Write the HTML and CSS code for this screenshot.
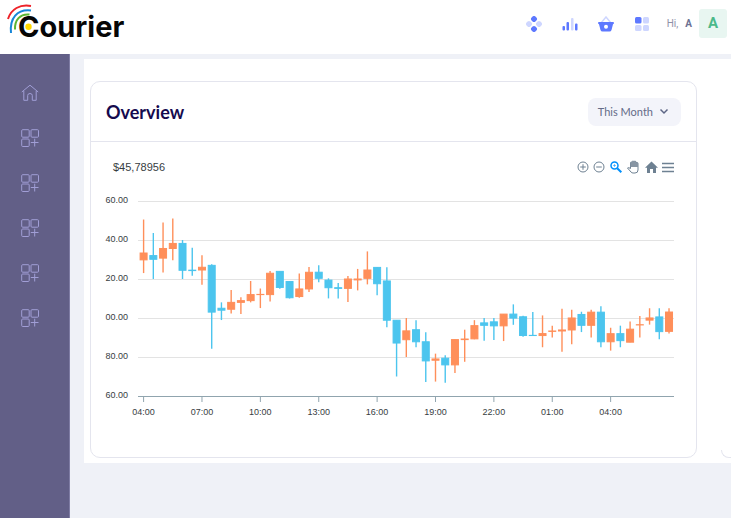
FILE: index.html
```html
<!DOCTYPE html>
<html lang="en">
<head>
    <meta charset="UTF-8">
    <meta name="viewport" content="width=device-width, initial-scale=1.0">
    <title>Courier</title>
    <link rel="stylesheet" href="styles.css">
</head>
<body>
    <header class="topbar">
        <a class="logo" href="#" aria-label="Courier">
            <svg width="130" height="48" viewBox="0 0 130 48">
                <text x="18" y="37" class="logo-text">Courier</text>
                <g fill="none" stroke-width="2">
                    <path d="M8 19 C11 9 20 4 31 6" stroke="#ee2229"/>
                    <path d="M11 33 C9.500 18 17 9 31 10.500" stroke="#1787d8"/>
                    <path d="M15 29.500 C14.500 20 20 13.500 29.500 14.500" stroke="#5cb531"/>
                </g>
                <circle cx="28.500" cy="26.700" r="3.200" fill="#ffd800"/>
            </svg>
        </a>

        <nav class="actions">
            <button type="button" aria-label="Apps">
                <svg width="16" height="16" viewBox="0 0 16 16">
                    <rect x="5.300" y="0.300" width="5.400" height="5.400" rx="2" transform="rotate(45 8 3)" fill="#5d78ff"/>
                    <rect x="5.300" y="10.300" width="5.400" height="5.400" rx="2" transform="rotate(45 8 13)" fill="#5d78ff"/>
                    <rect x="0.300" y="5.300" width="5.400" height="5.400" rx="2" transform="rotate(45 3 8)" fill="#ced6ff"/>
                    <rect x="10.300" y="5.300" width="5.400" height="5.400" rx="2" transform="rotate(45 13 8)" fill="#ced6ff"/>
                </svg>
            </button>
            <button type="button" aria-label="Statistics">
                <svg width="16" height="16" viewBox="0 0 16 16">
                    <rect x="0.500" y="10" width="2.500" height="4.500" rx="1" fill="#5d78ff"/>
                    <rect x="4.500" y="6" width="2.500" height="8.500" rx="1" fill="#5d78ff"/>
                    <rect x="9" y="2" width="2.500" height="12.500" rx="1" fill="#ced6ff"/>
                    <rect x="13" y="7.500" width="2.500" height="7" rx="1" fill="#5d78ff"/>
                </svg>
            </button>
            <button type="button" aria-label="Basket">
                <svg width="16" height="16" viewBox="0 0 16 16">
                    <path d="M3 7 L8 1 L13 7" fill="none" stroke="#ced6ff" stroke-width="1.500"/>
                    <path d="M1 6 H15 Q16 6 16 7 Q16 8 15 8.300 L13.500 14 Q13 15.500 11.500 15.500 H4.500 Q3 15.500 2.500 14 L1 8.300 Q0 8 0 7 Q0 6 1 6 Z" fill="#5d78ff"/>
                    <circle cx="8" cy="10.800" r="2" fill="#fff"/>
                </svg>
            </button>
            <button type="button" aria-label="Widgets">
                <svg width="16" height="16" viewBox="0 0 16 16">
                    <rect x="1" y="1" width="6.500" height="6.500" rx="1.500" fill="#5d78ff"/>
                    <rect x="9" y="1" width="6" height="6.500" rx="1.500" fill="#ced6ff"/>
                    <rect x="1" y="9" width="6.500" height="6" rx="1.500" fill="#ced6ff"/>
                    <rect x="9" y="9" width="6" height="6" rx="1.500" fill="#ced6ff"/>
                </svg>
            </button>
            <a class="user" href="#">
                <span>Hi,</span>
                <b>A</b>
                <span class="avatar">A</span>
            </a>
        </nav>
    </header>

    <div class="layout">
        <nav class="sidebar">
            <a href="#" aria-label="Home">
                <svg width="18" height="18" viewBox="0 0 18 18">
                    <path d="M0.800 8 L9 1.200 L17.200 8 M2.800 7 V16.300 H6.700 V11.500 Q6.700 9.500 9 9.500 Q11.300 9.500 11.300 11.500 V16.300 H15.200 V7"/>
                </svg>
            </a>
            <a href="#" aria-label="Menu 1"><svg width="18" height="18"><use href="#grid-plus"/></svg></a>
            <a href="#" aria-label="Menu 2"><svg width="18" height="18"><use href="#grid-plus"/></svg></a>
            <a href="#" aria-label="Menu 3"><svg width="18" height="18"><use href="#grid-plus"/></svg></a>
            <a href="#" aria-label="Menu 4"><svg width="18" height="18"><use href="#grid-plus"/></svg></a>
            <a href="#" aria-label="Menu 5"><svg width="18" height="18"><use href="#grid-plus"/></svg></a>
            <svg width="0" height="0" class="defs">
                <symbol id="grid-plus" viewBox="0 0 18 18">
                    <rect x="0.700" y="0.700" width="7.500" height="7.500" rx="1"/>
                    <rect x="10" y="0.700" width="7.500" height="7.500" rx="1"/>
                    <rect x="0.700" y="10" width="7.500" height="7.500" rx="1"/>
                    <path d="M13.700 9.700 V17.500 M9.800 13.500 H17.500"/>
                </symbol>
            </svg>
        </nav>

        <main class="content">
            <div class="panel">
                <section class="card">
                    <div class="card-header">
                        <h1>Overview</h1>
                        <button type="button" class="dropdown">
                            This Month
                            <svg width="10" height="8" viewBox="0 0 10 8">
                                <path d="M1.500 1.500 L5 5 L8.500 1.500" fill="none" stroke="#5d6685" stroke-width="1.500"/>
                            </svg>
                        </button>
                    </div>

                    <div class="chart-top">
                        <span class="price">$45,78956</span>
                        <div class="toolbar">
                            <button type="button" aria-label="Zoom in">
                                <svg width="12" height="12" viewBox="0 0 12 12" fill="none" stroke="#6e8192">
                                    <circle cx="6" cy="6" r="5"/>
                                    <path d="M6 3.200 V8.800 M3.200 6 H8.800"/>
                                </svg>
                            </button>
                            <button type="button" aria-label="Zoom out">
                                <svg width="12" height="12" viewBox="0 0 12 12" fill="none" stroke="#6e8192">
                                    <circle cx="6" cy="6" r="5"/>
                                    <path d="M3.200 6 H8.800"/>
                                </svg>
                            </button>
                            <button type="button" aria-label="Selection zoom">
                                <svg width="13" height="12" viewBox="0 0 13 12" fill="none" stroke="#008ffb">
                                    <circle cx="5.500" cy="4.500" r="3.500" stroke-width="1.500"/>
                                    <path d="M8.200 7.200 L12.300 11.300" stroke-width="2"/>
                                    <path d="M4 4.500 H7 M5.500 3 V6" stroke-width="0.500"/>
                                </svg>
                            </button>
                            <button type="button" aria-label="Pan">
                                <svg width="14" height="14" viewBox="0 0 14 14">
                                    <path d="M4.500 8.500 V3 Q4.500 2 5.300 2 Q6 2 6 3 V2 Q6.200 1 7 1 Q7.800 1 8 2 V1.800 Q8.200 1 9 1.100 Q9.800 1.200 10 2 V3 Q10.300 2.300 11 2.400 Q12 2.500 12 3.500 V10 Q12 13 9 13 H7 Q5.800 13 5 12 L1.500 8 Q2.500 7 4.500 8.500 Z" fill="#fff" stroke="#6e8192"/>
                                    <path d="M4.500 3 H6 V1.500 H8 V1 H10 V3 H12 V7 H4.500 Z" fill="#8795a3"/>
                                </svg>
                            </button>
                            <button type="button" aria-label="Reset zoom">
                                <svg width="14" height="14" viewBox="0 0 14 14">
                                    <path d="M7.500 1.500 L14 7.800 H12 V13 H9 V9 H6 V13 H3 V7.800 H1 Z" fill="#6e8192"/>
                                </svg>
                            </button>
                            <button type="button" aria-label="Menu">
                                <svg width="12" height="12" viewBox="0 0 12 12">
                                    <path d="M0 2.500 H12 M0 6.500 H12 M0 10.500 H12" stroke="#6e8192" stroke-width="1.400"/>
                                </svg>
                            </button>
                        </div>
                    </div>

                    <svg class="chart" id="chart" viewBox="0 0 605 230"></svg>
                </section>

                <section class="next-card"></section>
            </div>
        </main>
    </div>

    <script src="script.js"></script>
</body>
</html>
```
FILE: styles.css
```css
* {
    box-sizing: border-box;
}

body {
    margin: 0;
    min-height: 100vh;
    display: flex;
    flex-direction: column;
    background-color: #eff1f7;
    font-family: Lato, sans-serif;
    overflow-x: hidden;
}

button {
    border: none;
    background: none;
    padding: 0;
    cursor: pointer;
}

svg {
    display: block;
}

a {
    text-decoration: none;
}

/* top bar */
.topbar {
    height: 54px;
    background-color: #fff;
    display: flex;
    justify-content: space-between;
    padding-right: 4px;
}

.logo-text {
    font-family: Inter, sans-serif;
    font-size: 29px;
    font-weight: 700;
    fill: #060606;
}

.actions {
    display: flex;
    align-items: center;
    gap: 20px;
    height: 47px;
}

.user {
    display: flex;
    align-items: center;
    gap: 7px;
    margin-left: -3px;
    font-family: Roboto, sans-serif;
    font-size: 10px;
    color: #8f91a8;
}

.user b {
    color: #6c7293;
}

.avatar {
    width: 28px;
    height: 29px;
    border-radius: 3px;
    background-color: #e8f6f1;
    color: #4bb98a;
    font-size: 15px;
    font-weight: 700;
    line-height: 29px;
    text-align: center;
}

/* side menu */
.layout {
    flex: 1;
    display: flex;
}

.sidebar {
    width: 70px;
    flex-shrink: 0;
    background-color: #625f87;
    border-right: 1px solid #7f7ca4;
    padding: 30px 21px;
    display: flex;
    flex-direction: column;
    gap: 27px;
}

.sidebar a {
    height: 18px;
}

.sidebar svg {
    fill: none;
    stroke: #a19ed6;
}

.defs {
    position: absolute;
}

/* overview */
.content {
    flex: 1;
    min-width: 0;
    padding: 5px 0 0 14px;
}

.panel {
    background-color: #fff;
    display: flex;
    gap: 24px;
    padding: 22px 0 5px 6px;
}

.card {
    flex: 1;
    min-width: 0;
    border: 1px solid #e4e5ee;
    border-radius: 10px;
    padding-bottom: 37px;
}

.card-header {
    display: flex;
    justify-content: space-between;
    align-items: center;
    height: 60px;
    padding: 0 15px;
    border-bottom: 1px solid #e4e5ee;
}

h1 {
    margin: 0;
    font-size: 18px;
    font-weight: 700;
    color: #150a4e;
}

.dropdown {
    display: flex;
    align-items: center;
    gap: 6px;
    height: 28px;
    padding: 0 12px 0 10px;
    border-radius: 8px;
    background-color: #f3f4fa;
    font-family: Lato, sans-serif;
    font-size: 11px;
    color: #646c88;
}

.chart-top {
    display: flex;
    justify-content: space-between;
    align-items: center;
    padding: 16px 22px 14px;
    height: 48px;
}

.price {
    font-family: "Liberation Sans", sans-serif;
    font-size: 11px;
    color: #373d3f;
}

.toolbar {
    display: flex;
    align-items: center;
    gap: 4px;
}

.chart {
    width: 100%;
}

.chart text {
    font-family: "Liberation Sans", sans-serif;
    font-size: 9px;
    fill: #373d3f;
}

.grid-line {
    stroke: #e3e3e3;
}

.axis {
    stroke: #90a4ae;
}

.up {
    fill: #ff8f5a;
    stroke: #ff8f5a;
}

.down {
    fill: #4cc5ee;
    stroke: #4cc5ee;
}

.wick {
    stroke-width: 1.4;
}

/* the next card starts at the right edge */
.next-card {
    width: 10px;
    height: 8px;
    align-self: flex-end;
    border-left: 1px solid #e4e5ee;
    border-bottom: 1px solid #e4e5ee;
    border-radius: 0 0 0 10px;
}
```
FILE: script.js
```js
// open, high, low, close
const candles = [
    [6629.81, 6650.5, 6623.04, 6633.33],
    [6632.01, 6643.59, 6620, 6630.11],
    [6630.71, 6648.95, 6623.34, 6635.65],
    [6635.65, 6651, 6629.67, 6638.24],
    [6638.24, 6640, 6620, 6624.47],
    [6624.53, 6636.03, 6621.68, 6624.31],
    [6624.61, 6632.2, 6617, 6626.02],
    [6627, 6627.62, 6584.22, 6603.02],
    [6605, 6608.03, 6598.95, 6604.01],
    [6604.5, 6614.4, 6602.26, 6608.02],
    [6608.02, 6610.68, 6601.99, 6608.91],
    [6608.91, 6618.99, 6608.01, 6612],
    [6612, 6615.13, 6605.09, 6612.1],
    [6612, 6624.12, 6608.43, 6622.95],
    [6623.91, 6623.91, 6615, 6615.67],
    [6618.69, 6618.74, 6610, 6610.4],
    [6611, 6622.78, 6610.4, 6614.9],
    [6614.9, 6626.2, 6613.33, 6623.45],
    [6623.48, 6627, 6618.38, 6620.35],
    [6619.43, 6620.35, 6610.05, 6615.53],
    [6615.53, 6617.93, 6610, 6615.19],
    [6615.19, 6621.6, 6608.2, 6620],
    [6619.54, 6625.17, 6614.15, 6620],
    [6620.33, 6634.15, 6617.24, 6624.61],
    [6625.95, 6626, 6611.66, 6617.58],
    [6619, 6625.97, 6595.27, 6598.86],
    [6598.86, 6598.88, 6570, 6587.16],
    [6588.86, 6600, 6580, 6593.4],
    [6593.99, 6598.89, 6585, 6587.81],
    [6587.81, 6592.73, 6567.14, 6578],
    [6578.35, 6581.72, 6567.39, 6579],
    [6579.38, 6580.92, 6566.77, 6575.96],
    [6575.96, 6589, 6571.77, 6588.92],
    [6588.92, 6594, 6577.55, 6589.22],
    [6589.3, 6598.89, 6589.1, 6596.08],
    [6597.5, 6600, 6588.39, 6596.25],
    [6598.03, 6600, 6588.73, 6595.97],
    [6595.97, 6602.01, 6588.17, 6602],
    [6602, 6607, 6596.51, 6599.95],
    [6600.63, 6601.21, 6590.39, 6591.02],
    [6591.1, 6603.08, 6591, 6591],
    [6591, 6601.32, 6585, 6592],
    [6593.13, 6596.01, 6590, 6593.34],
    [6593.34, 6604.76, 6582.63, 6593.86],
    [6593.86, 6604.28, 6586.57, 6600.01],
    [6601.81, 6603.21, 6592.78, 6596.25],
    [6596.25, 6604.2, 6590, 6602.99],
    [6602.99, 6606, 6584.99, 6587.81],
    [6587.81, 6595, 6583.27, 6591.96],
    [6591.97, 6596.07, 6585, 6588.39],
    [6587.6, 6598.21, 6587.6, 6594.27],
    [6596.44, 6601, 6590, 6596.55],
    [6598.91, 6605, 6596.61, 6600.02],
    [6600.55, 6605, 6589.14, 6593.01],
    [6593.15, 6605, 6592, 6603.06]
];

const yLabels = ["60.00", "40.00", "20.00", "00.00", "80.00", "60.00"];
const xLabels = ["04:00", "07:00", "10:00", "13:00", "16:00", "19:00", "22:00", "01:00", "04:00"];

const left = 47;
const right = 583;
const top0 = 11;
const rowHeight = 39;

function toX(i) {
    return 52.6 + i * 9.73;
}

function toY(price) {
    return top0 + (6660 - price) / 20 * rowHeight;
}

let html = "";

yLabels.forEach((label, i) => {
    const y = top0 + i * rowHeight + 0.5;
    const cls = i === yLabels.length - 1 ? "axis" : "grid-line";
    html += `<line class="${cls}" x1="${left}" x2="${right}" y1="${y}" y2="${y}"/>`;
    html += `<text x="37" y="${y + 1}" text-anchor="end">${label}</text>`;
});

xLabels.forEach((label, i) => {
    const x = toX(i * 6);
    html += `<line class="axis" x1="${x}" x2="${x}" y1="207" y2="212"/>`;
    html += `<text x="${x}" y="225" text-anchor="middle">${label}</text>`;
});

candles.forEach(([open, high, low, close], i) => {
    const x = toX(i);
    const top = toY(Math.max(open, close));
    const height = Math.abs(toY(open) - toY(close));
    html += `<g class="${close >= open ? "up" : "down"}">
        <line class="wick" x1="${x}" x2="${x}" y1="${toY(high)}" y2="${toY(low)}"/>
        <rect x="${x - 3.5}" y="${top}" width="7" height="${height}"/>
    </g>`;
});

document.getElementById("chart").innerHTML = html;
```
